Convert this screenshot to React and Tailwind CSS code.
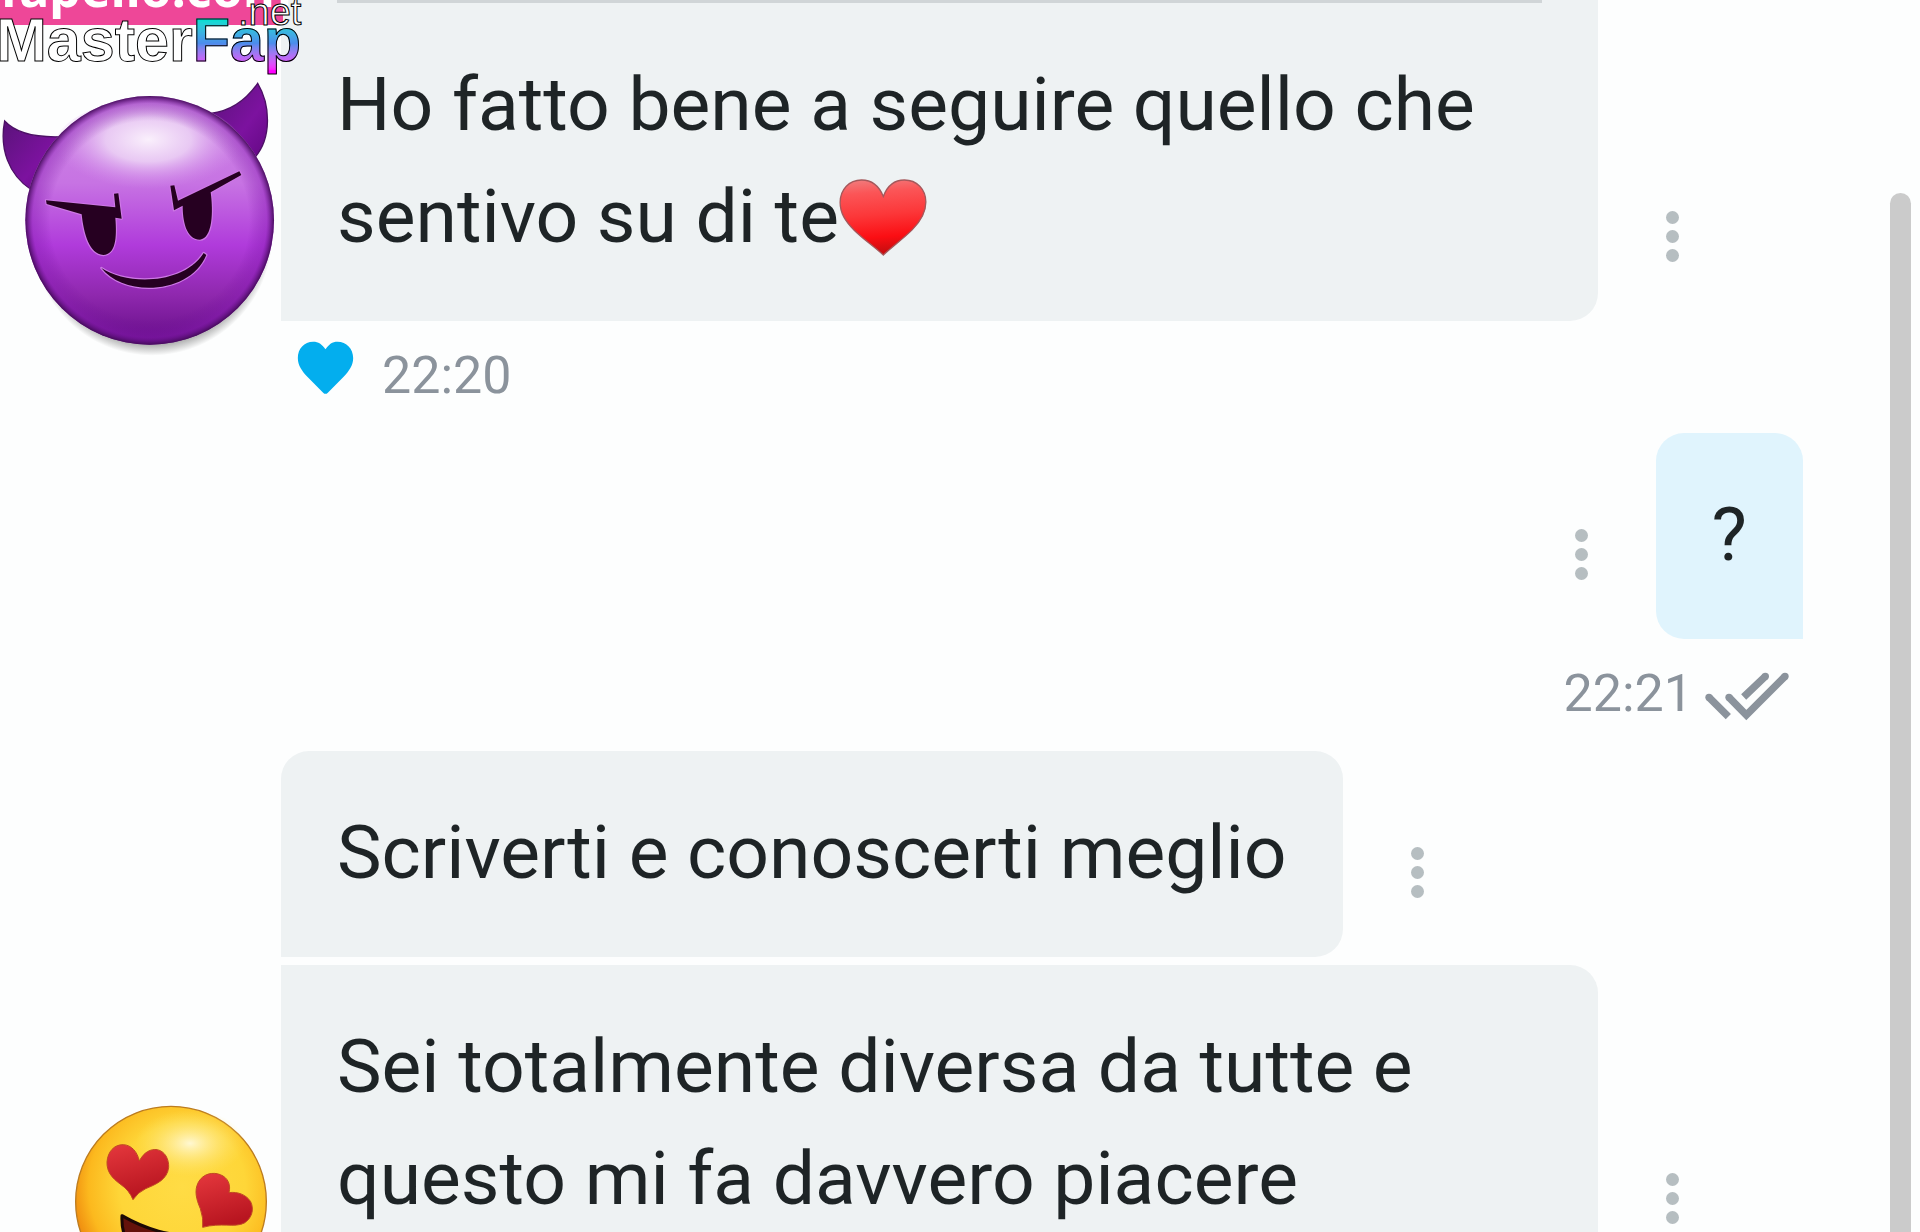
import { useId } from 'react';

const messages = [
  { id: 1, text: 'Ho fatto bene a seguire quello che sentivo su di te', heart: true, variant: 'quoted', time: '22:20', liked: true },
  { id: 2, text: '?', variant: 'outgoing', time: '22:21' },
  { id: 3, text: 'Scriverti e conoscerti meglio', variant: 'first' },
  { id: 4, text: 'Sei totalmente diversa da tutte e questo mi fa davvero piacere', variant: 'last' },
];

const bubbleStyles = {
  quoted: 'rounded-br-[28px] bg-[#eef2f3]',
  outgoing: 'rounded-[28px] rounded-br-none bg-[#e0f4fd]',
  first: 'rounded-[28px] rounded-bl-none bg-[#eef2f3]',
  last: 'rounded-r-[28px] bg-[#eef2f3]',
};

function RedHeart() {
  const id = useId();
  return (
    <svg viewBox="48 55 262 230" className="inline-block w-[88px] h-[77px] align-[-14px]" role="img" aria-label="cuore rosso">
      <defs>
        <linearGradient id={id} x1="0" y1="0" x2="0.1" y2="1">
          <stop offset="0" stopColor="#f07f80" />
          <stop offset="0.2" stopColor="#fb5557" />
          <stop offset="0.5" stopColor="#fc3739" />
          <stop offset="0.8" stopColor="#fb0e13" />
          <stop offset="1" stopColor="#c90d10" />
        </linearGradient>
      </defs>
      <path
        d="M180 107C166 73 143 58 115 58C77 58 51 87 51 125C51 157 66 180 93 208C119 234 153 257 180 282C207 257 241 232 266 207C293 180 307 156 307 124C307 86 280 58 243 58C215 58 192 75 180 107Z"
        fill={`url(#${id})`}
        stroke="#a5585b"
        strokeWidth="4"
      />
    </svg>
  );
}

function LikeIcon() {
  return (
    <svg viewBox="84 93 170 174" className="mb-3 w-[57px] h-[58px]" aria-hidden="true">
      <path
        d="M169 118C158 102 148 95 132 95C105 95 86 116 86 144C86 166 98 183 116 202L162 248Q169 255 176 248L222 202C240 183 252 166 252 144C252 116 232 95 205 95C189 95 180 102 169 118Z"
        fill="#03aeee"
      />
    </svg>
  );
}

function ReadIcon() {
  return (
    <svg viewBox="495 757 252 147" className="mt-1 w-[84px] h-[49px]" fill="none" stroke="#8b939c" strokeWidth="22" aria-hidden="true">
      <path d="M507 833L565 891M567 833L619 886L735 770M611 832L676 770" />
      <g fill="#8b939c" stroke="none">
        <circle cx="507" cy="833" r="11" />
        <circle cx="567" cy="833" r="11" />
        <circle cx="676" cy="770" r="11" />
        <circle cx="735" cy="770" r="11" />
      </g>
    </svg>
  );
}

function MenuButton() {
  return (
    <button type="button" aria-label="Altre opzioni" className="mb-[59px] flex h-[51px] w-[13px] shrink-0 flex-col justify-between">
      <span className="size-[13px] rounded-full bg-[#b6bec1]" />
      <span className="size-[13px] rounded-full bg-[#b6bec1]" />
      <span className="size-[13px] rounded-full bg-[#b6bec1]" />
    </button>
  );
}

function Message({ text, heart, variant, time, liked }) {
  const outgoing = variant === 'outgoing';

  return (
    <li className={`flex flex-col ${outgoing ? 'items-end' : 'items-start'} ${variant === 'first' ? 'mb-2' : ''}`}>
      <div className={`flex items-end gap-[68px] ${outgoing ? 'flex-row-reverse' : ''}`}>
        <div className={`max-w-[1317px] px-14 ${bubbleStyles[variant]}`}>
          {variant === 'quoted' && <hr className="border-t-[3px] border-[#d0d5d7]" />}
          <p className="pt-[45px] pb-[49px] text-[75px] leading-[112px] text-[#1e2426]">
            {text}
            {heart && <RedHeart />}
          </p>
        </div>
        <MenuButton />
      </div>
      {time && (
        <div className={`flex h-28 items-center pb-0.5 ${outgoing ? 'gap-3 pr-3.5' : 'gap-7 pl-4'}`}>
          {liked && <LikeIcon />}
          <time className="text-[52px] text-[#8b939c]">{time}</time>
          {outgoing && <ReadIcon />}
        </div>
      )}
    </li>
  );
}

function DevilSticker() {
  const id = useId();
  return (
    <svg viewBox="0 0 900 900" className="absolute left-0 top-[70px] size-[300px]" role="img" aria-label="diavoletto">
      <defs>
        <linearGradient id={`${id}f`} x1="0" y1="0" x2="0" y2="1">
          <stop offset="0" stopColor="#cd8ae4" />
          <stop offset="0.35" stopColor="#c773e3" />
          <stop offset="0.6" stopColor="#b03bdb" />
          <stop offset="0.8" stopColor="#8f28ae" />
          <stop offset="1" stopColor="#650d87" />
        </linearGradient>
        <radialGradient id={`${id}e`}>
          <stop offset="0.8" stopColor="#6a0a96" stopOpacity="0" />
          <stop offset="0.94" stopColor="#8318ae" stopOpacity="0.4" />
          <stop offset="1" stopColor="#430a58" stopOpacity="0.95" />
        </radialGradient>
        <radialGradient id={`${id}g`} cy="0.4">
          <stop offset="0" stopColor="#faf0fc" />
          <stop offset="0.45" stopColor="#eed6f6" stopOpacity="0.85" />
          <stop offset="1" stopColor="#d896ee" stopOpacity="0" />
        </radialGradient>
        <radialGradient id={`${id}s`}>
          <stop offset="0.88" stopColor="#333" stopOpacity="0.5" />
          <stop offset="1" stopColor="#333" stopOpacity="0" />
        </radialGradient>
        <linearGradient id={`${id}h`} x1="0" y1="0" x2="1" y2="1">
          <stop offset="0" stopColor="#5a137a" />
          <stop offset="0.6" stopColor="#7c129f" />
          <stop offset="1" stopColor="#640884" />
        </linearGradient>
      </defs>
      <ellipse cx="456" cy="492" rx="362" ry="365" fill={`url(#${id}s)`} />
      <g fill={`url(#${id}h)`} stroke="#4c1065" strokeWidth="4">
        <path d="M14 153C48 190 105 203 185 200L95 360C25 315-2 235 14 153Z" />
        <path d="M773 40C738 90 694 123 632 130L765 262C815 205 812 105 773 40Z" />
      </g>
      <circle cx="449" cy="451" r="373" fill={`url(#${id}f)`} />
      <ellipse cx="445" cy="238" rx="285" ry="148" fill={`url(#${id}g)`} />
      <circle cx="449" cy="451" r="373" fill={`url(#${id}e)`} />
      <g fill="#260021" stroke="#cd78e5" strokeWidth="7" strokeLinejoin="round" paintOrder="stroke">
        <path d="M138 391L346 412L342 371L355 370L365 446L346 443C351 505 347 552 310 555C268 553 251 490 245 433L140 402Z" />
        <path d="M511 347L523 346L534 392L718 304L724 315L632 367C640 425 638 505 600 509C557 508 548 449 548 407L522 421Z" />
        <path d="M304 594C380 646 550 645 611 549L619 555C570 675 371 682 304 594Z" />
      </g>
    </svg>
  );
}

function LoveSticker() {
  const id = useId();
  return (
    <svg viewBox="0 0 720 720" className="absolute left-[50px] top-[1090px] size-60" role="img" aria-label="occhi a cuore">
      <defs>
        <radialGradient id={`${id}f`} cx="0.56" cy="0.42" r="0.6">
          <stop offset="0" stopColor="#ffdc45" />
          <stop offset="0.55" stopColor="#fed638" />
          <stop offset="0.82" stopColor="#fcb91e" />
          <stop offset="1" stopColor="#ed850d" />
        </radialGradient>
        <radialGradient id={`${id}g`}>
          <stop offset="0" stopColor="#fff8d2" />
          <stop offset="1" stopColor="#ffe56b" stopOpacity="0" />
        </radialGradient>
        <linearGradient id={`${id}h`} x1="0" y1="0" x2="0.3" y2="1">
          <stop offset="0" stopColor="#e5383d" />
          <stop offset="1" stopColor="#b81520" />
        </linearGradient>
      </defs>
      <circle cx="363" cy="335" r="286" fill={`url(#${id}f)`} stroke="#bc7c20" strokeWidth="4" />
      <ellipse cx="420" cy="160" rx="165" ry="100" fill={`url(#${id}g)`} />
      <g fill={`url(#${id}h)`} stroke="#c04a22" strokeWidth="3">
        <path d="M268 213C282 186 302 176 322 179C345 184 357 207 356 232C352 268 321 282 287 296Q263 307 249 329Q238 301 213 284C184 263 170 244 171 216C173 185 193 163 220 164C244 165 262 185 268 213Z" />
        <path d="M537 308C562 304 589 314 602 335C614 360 604 386 583 399C554 414 514 397 458 412Q461 385 451 356C439 328 432 302 445 277C459 251 488 245 511 254C534 263 543 284 537 308Z" />
      </g>
      <path d="M216 377C290 420 350 435 470 445L430 560C300 550 210 480 216 377Z" fill="#64120b" stroke="#1c0805" strokeWidth="9" strokeLinejoin="round" />
    </svg>
  );
}

function Watermarks() {
  return (
    <div className="absolute left-0 top-0 h-20 w-80 overflow-hidden whitespace-nowrap font-['Liberation_Sans']">
      <div className="h-[25px] w-[283px] bg-[#ee4798]">
        <span className="absolute left-0 -top-[42px] font-['Noto_Sans'] text-[50px] font-bold leading-[60px] text-white">fapello.com</span>
      </div>
      <div className="absolute -left-1 top-1 text-[61px] font-bold leading-[72px] text-white">
        <span className="[-webkit-text-stroke:1px_#000]">Master</span>
        <span className="bg-linear-to-b from-[#00dfd0] from-20% via-[#4c8cec] via-55% to-[#ff00ff] to-95% bg-clip-text text-transparent [-webkit-text-stroke:1px_#000]">Fap</span>
      </div>
      <span className="absolute left-[238px] -top-3 text-[38px] leading-[48px] text-white [-webkit-text-stroke:1px_#000]">.net</span>
    </div>
  );
}

export default function App() {
  return (
    <main className="relative flex h-screen overflow-hidden bg-[#fdfefe] font-[Roboto,sans-serif]">
      <ul className="flex-1 pl-[281px] pr-[87px]">
        {messages.map((message) => (
          <Message key={message.id} {...message} />
        ))}
      </ul>
      <div className="mr-[9px] flex w-[21px] pt-[193px]">
        <div className="flex-1 rounded-t-full bg-[#cbcbcb]" />
      </div>
      <DevilSticker />
      <LoveSticker />
      <Watermarks />
    </main>
  );
}
